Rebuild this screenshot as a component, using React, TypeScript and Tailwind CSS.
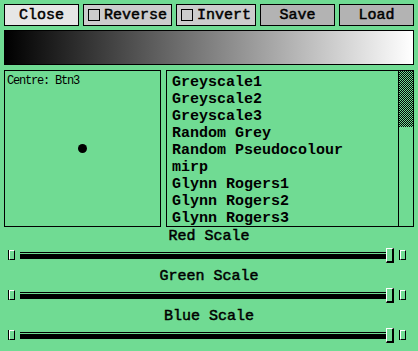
const mono = "font-['Liberation_Mono','DejaVu_Sans_Mono',monospace]";
// medium weight, between Liberation Mono regular and bold
const medium = "[-webkit-text-stroke:0.5px_black]";

const colourMaps = [
  "Greyscale1",
  "Greyscale2",
  "Greyscale3",
  "Random Grey",
  "Random Pseudocolour",
  "mirp",
  "Glynn Rogers1",
  "Glynn Rogers2",
  "Glynn Rogers3",
];

function CheckButton({ label, width }: { label: string; width: string }) {
  return (
    <div className={`flex h-[22px] ${width} items-center border border-black bg-[#cccccc] pl-[4px]`}>
      <span className="h-[12px] w-[12px] shrink-0 border border-black bg-[#cccccc]" />
      <span className={`pl-[4px] text-[15px] leading-[17px] ${medium}`}>{label}</span>
    </div>
  );
}

function Button({ label, width, bg }: { label: string; width: string; bg: string }) {
  return (
    <div className={`flex h-[22px] ${width} ${bg} items-center justify-center border border-black text-[15px] leading-[17px] ${medium}`}>
      {label}
    </div>
  );
}

function Slider({ label }: { label: string }) {
  return (
    <div className="flex flex-col">
      <div className={`h-[17px] text-center text-[15px] leading-[17px] ${medium}`}>{label}</div>
      <div className="flex h-[20px] items-center pl-[9px]">
        {/* left stepper */}
        <span className="h-[10px] w-[6px] border border-black border-l-white border-t-white shadow-[-1px_0_0_#000]" />
        {/* track */}
        <div className="ml-[5px] flex h-[7px] w-[366px] flex-col">
          <div className="h-[1px] bg-black" />
          <div className="h-[1px]" />
          <div className="h-[5px] bg-black" />
        </div>
        {/* thumb */}
        <span className="h-[15px] w-[8px] border border-l-white border-t-white border-r-black border-b-black border-r-2 border-b-2" />
        {/* right stepper */}
        <span className="ml-[6px] h-[10px] w-[6px] border border-black border-l-white border-t-white shadow-[-1px_0_0_#000]" />
      </div>
      <div className="h-[3px]" />
    </div>
  );
}

export default function App() {
  return (
    <div className={`h-[351px] w-[418px] overflow-hidden bg-[#70db93] text-black ${mono}`}>
      {/* button bar */}
      <div className="flex gap-[4px] px-[4px] pt-[4px]">
        <Button label="Close" width="w-[75px]" bg="bg-[#e6e6e6]" />
        <CheckButton label="Reverse" width="w-[89px]" />
        <CheckButton label="Invert" width="w-[80px]" />
        <Button label="Save" width="w-[75px]" bg="bg-[#b3b3b3]" />
        <Button label="Load" width="w-[75px]" bg="bg-[#b3b3b3]" />
      </div>

      {/* colour ramp */}
      <div className="mx-[4px] mt-[4px] h-[35px] w-[410px] border border-black bg-[linear-gradient(to_right,#000,#fff)]" />

      {/* panels */}
      <div className="mt-[5px] flex gap-[5px] px-[4px]">
        <div className="relative h-[157px] w-[157px] border border-black">
          <div className="pl-[2px] pt-[4px] text-[12px] leading-[13px] tracking-[-1.2px]">Centre: Btn3</div>
          <span className="absolute left-[73px] top-[73px] h-[9px] w-[9px] rounded-full bg-black" />
        </div>
        <div className="flex h-[157px] w-[248px] border border-black">
          <div className="flex-1 overflow-hidden pl-[5px] pt-[3px]">
            {colourMaps.map((name) => (
              <div key={name} className="h-[17px] whitespace-pre text-[15px] font-bold leading-[17px]">
                {name}
              </div>
            ))}
          </div>
          <div className="w-[15px] border-l border-black">
            <div className="h-[56px] bg-[conic-gradient(#000_25%,transparent_0_50%,#000_0_75%,transparent_0)] bg-[length:2px_2px]" />
          </div>
        </div>
      </div>

      {/* colour scales */}
      <div className="mt-[1px] flex flex-col">
        <Slider label="Red Scale" />
        <Slider label="Green Scale" />
        <Slider label="Blue Scale" />
      </div>
    </div>
  );
}
